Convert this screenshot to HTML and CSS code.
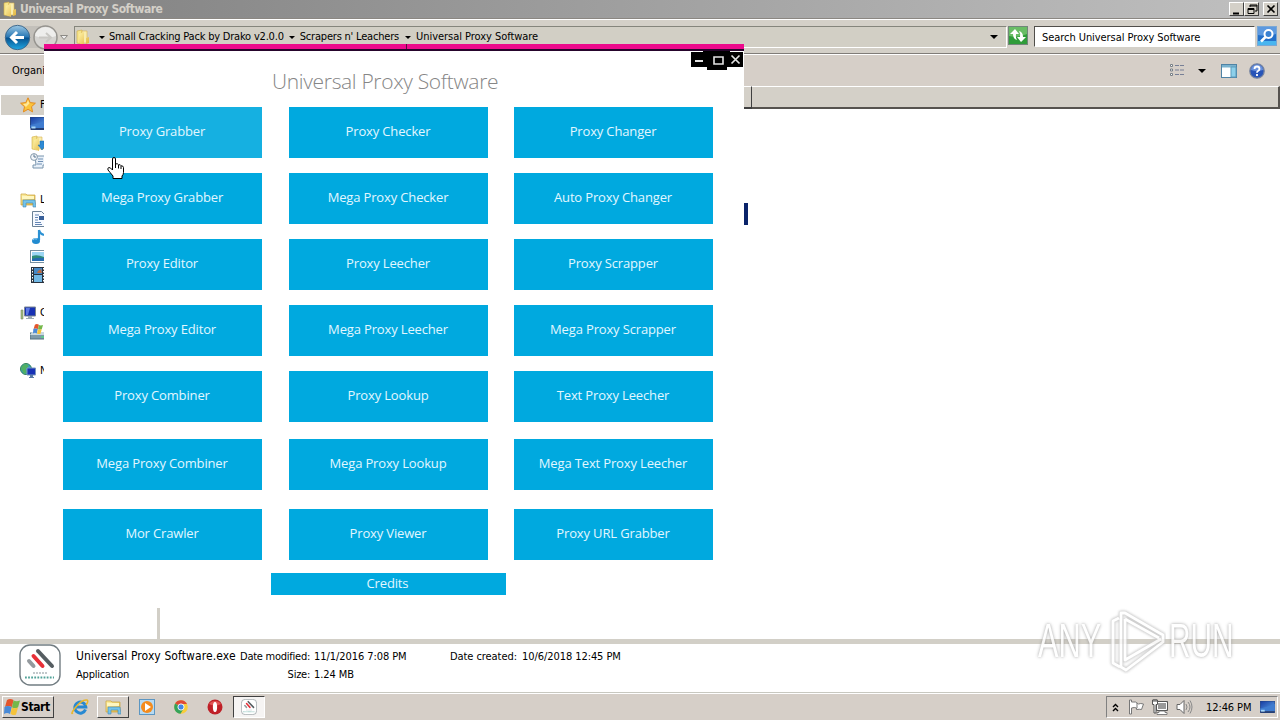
FILE: index.html
```
<!DOCTYPE html>
<html lang="en">
<head>
    <meta charset="UTF-8">
    <title>Universal Proxy Software</title>
    <link rel="stylesheet" href="styles.css">
</head>
<body>
    <!-- shared icons -->
    <svg class="defs" width="0" height="0">
        <defs>
            <linearGradient id="blue" x1="0" y1="0" x2="0" y2="1">
                <stop offset="0" stop-color="#9cc8e4"/>
                <stop offset=".48" stop-color="#2877b4"/>
                <stop offset=".52" stop-color="#07528f"/>
                <stop offset="1" stop-color="#20a8e4"/>
            </linearGradient>
            <linearGradient id="yellow" x1="0" y1="0" x2="1" y2="1">
                <stop offset="0" stop-color="#fff3a8"/>
                <stop offset="1" stop-color="#e0b23c"/>
            </linearGradient>
            <linearGradient id="screen" x1="0" y1="0" x2="1" y2="1">
                <stop offset="0" stop-color="#1538a0"/>
                <stop offset="1" stop-color="#5ca6ea"/>
            </linearGradient>
        </defs>
        <symbol id="folder" viewBox="0 0 16 16">
            <path d="M2 2l5-1v14l-5-1z" fill="#f6e48c" stroke="#d2ac45" stroke-width=".6"/>
            <path d="M7 2h5v12H7z" fill="#f9edae" stroke="#d8b450" stroke-width=".6"/>
            <path d="M4 5l5-2v13l-5-2zM11 9l3-1v6l-3 1z" fill="url(#yellow)"/>
        </symbol>
        <symbol id="library" viewBox="0 0 16 16">
            <path d="M1 2h5l1 1h8v10H1z" fill="url(#yellow)" stroke="#c9a13a" stroke-width=".7"/>
            <path d="M2 4h12v3H2z" fill="#fff7c0"/>
            <path d="M3 8h12l1 7h-3v-4H6v4H3z" fill="#74c4ea" stroke="#4387b4" stroke-width=".6"/>
        </symbol>
        <symbol id="monitor" viewBox="0 0 16 13">
            <path d="M0 0h16v11H0z" fill="url(#screen)" stroke="#244482"/>
            <path d="M0 8q8-1 16-5v8H0z" fill="#3f7cd0"/>
            <path d="M0 11h16v2H0z" fill="#243f76"/>
            <path d="M1 9.500h4v2H1z" fill="#a7d7f8"/>
        </symbol>
        <symbol id="flag" viewBox="0 0 16 16">
            <path fill="#e4552c" d="M3 1q3-2 6.500 0L8 8Q4 6 1 8z"/>
            <path fill="#74b84a" d="M9.500 1.500q3 1.500 6.500 0l-2 7q-3 1-6 0z"/>
            <path fill="#4a8ad6" d="M.5 8q3-2 7.300 0L6 15q-3-2-6 0z"/>
            <path fill="#f5c33a" d="M7.800 8.500q3 1.500 6.200 0l-2 7q-2 1.500-5.500-.5z"/>
        </symbol>
        <symbol id="applogo" viewBox="0 0 42 42">
            <rect x="1" y="1" width="40" height="40" rx="10" fill="#fff" stroke="#727d82" stroke-width="1.400"/>
            <g stroke-width="4" stroke-linecap="round">
                <path d="M19 7l14 15" stroke="#555d61"/>
                <path d="M14.500 12l9 10" stroke="#e83038"/>
                <path d="M10 17l4.500 5" stroke="#949a9e"/>
            </g>
            <path d="M14 29h14" stroke="#c3c9cc" stroke-width="2" stroke-dasharray="2 1"/>
            <path d="M6 33.500h29" stroke="#51a298" stroke-width="1.800" stroke-dasharray="1.800 1.300"/>
        </symbol>
    </svg>

    <div class="explorer">
        <div class="titlebar">
            <svg class="title-icon" width="16" height="16"><use href="#folder"/></svg>
            <span class="title-text">Universal Proxy Software</span>
            <div class="win-buttons">
                <svg width="15" height="14"><path d="M3 9.500h6v2H3z"/></svg>
                <svg width="15" height="14"><path d="M5 2h7v6h-2M5 2v2M5 3h7M3 5.500h6v5H3zM3 6.500h6" fill="none" stroke="#000"/></svg>
                <svg class="close" width="15" height="14"><path d="M3.500 2.500l7 7M10.500 2.500l-7 7" stroke="#000" stroke-width="1.600"/></svg>
            </div>
        </div>

        <div class="navbar">
            <svg class="nav-buttons" width="66" height="30" viewBox="0 0 66 30">
                <path d="M14 3h32v22H14z" fill="#c3c0ba"/>
                <circle cx="13.500" cy="14.500" r="12.200" fill="url(#blue)" stroke="#416a8c"/>
                <path d="M20 14.500H8M13 9l-5.500 5.500L13 20" fill="none" stroke="#fff" stroke-width="3"/>
                <circle cx="41.500" cy="14.500" r="11.500" fill="#d6d5d2" stroke="#96948f" stroke-width="1.500"/>
                <path d="M31 13a10.500 9 0 0 1 21 0q-10 4-21 0z" fill="#eeeeec"/>
                <path d="M35 14.500h12M42 10l5 4.500-5 4.500" fill="none" stroke="#c9c8c4" stroke-width="2"/>
                <path d="M56.500 12.500h7l-3.500 4z" fill="#eee" stroke="#8c8a85"/>
            </svg>
            <div class="address">
                <svg width="16" height="16"><use href="#folder"/></svg>
                <i class="arrow first"></i>
                <span class="crumb c1">Small Cracking Pack by Drako v2.0.0</span>
                <i class="arrow"></i>
                <span class="crumb c2">Scrapers n' Leachers</span>
                <i class="arrow third"></i>
                <span class="crumb c3">Universal Proxy Software</span>
                <i class="arrow last"></i>
            </div>
            <svg class="refresh" width="20" height="19" viewBox="0 0 20 19">
                <rect x=".5" y=".5" width="19" height="18" fill="#2f9c39" stroke="#71867a"/>
                <path d="M1 1h18v7q-9 4-18 2z" fill="#69bd65"/>
                <path d="M7 3L2 8h3q0 5 4 6-1.500-2-1-6h3z" fill="#fff"/>
                <path d="M13 16l5-5h-3q0-5-4-6 1.500 2 1 6H9z" fill="#fff"/>
            </svg>
            <div class="search"><span>Search Universal Proxy Software</span></div>
            <svg class="search-go" width="20" height="20" viewBox="0 0 20 20">
                <rect x=".5" y=".5" width="19" height="19" fill="#236fc9" stroke="#7aa7d4"/>
                <path d="M1 1h18v7Q10 11 1 9z" fill="#5d99df"/>
                <path d="M1 15h18v4H1z" fill="#49b5ef"/>
                <circle cx="11.500" cy="8" r="4" fill="#3b82d2" stroke="#fff" stroke-width="2"/>
                <path d="M8.500 11L4 15.500" stroke="#fff" stroke-width="2.500"/>
            </svg>
        </div>

        <div class="toolbar">
            <span class="organize">Organi</span>
            <svg class="views" width="16" height="14" viewBox="0 0 16 14">
                <path d="M1.500.5h2v2h-2zM1.500 5h2v2h-2zM1.500 9.500h2v2h-2z" fill="#fff" stroke="#777f86"/>
                <path d="M6 1.500h4M11 1.500h4M6 6h4M11 6h4M6 10.500h4M11 10.500h4" stroke="#777f96"/>
            </svg>
            <i class="arrow"></i>
            <svg class="preview" width="16" height="14" viewBox="0 0 16 14">
                <rect x=".5" y=".5" width="15" height="13" fill="#fff" stroke="#4f83a5"/>
                <path d="M1 1h14v2.500H1z" fill="#79b2ce"/>
                <path d="M10 3h5v10h-5z" fill="#8dd0ea" stroke="#5c9bbb"/>
            </svg>
            <svg class="help" width="16" height="16" viewBox="0 0 16 16">
                <circle cx="8" cy="8" r="7.200" fill="#2854b8" stroke="#75839f" stroke-width="1.300"/>
                <path d="M2 7a6 5.500 0 0 1 12 0q-6 2-12 0z" fill="#6a91dc"/>
                <path d="M5.500 6q0-2.500 2.500-2.500T10.500 6q0 1-1.500 2-1 .5-1 1.800M8 11v2" fill="none" stroke="#fff" stroke-width="1.800"/>
            </svg>
        </div>

        <div class="columns-bar"><div class="columns-left"></div><div class="columns-main"></div></div>

        <div class="panes">
            <div class="sidebar">
                <div class="side-item selected">
                    <svg width="16" height="16" viewBox="0 0 16 16"><path d="M8 .8l2.200 4.800 5.200.6-3.900 3.500 1.100 5.200L8 12.300l-4.600 2.600 1.100-5.200L.6 6.200l5.200-.6z" fill="#fbc43b" stroke="#e38b20"/><path d="M8 3l1.400 3.500L6 10 3 7l3.500-.5z" fill="#ffe798"/></svg>
                    <span>F</span>
                </div>
                <div class="side-item sub"><svg width="17" height="13"><use href="#monitor"/></svg></div>
                <div class="side-item sub">
                    <svg width="16" height="16" viewBox="0 0 16 16"><use href="#folder"/><path d="M10 6h4v4h2l-4 5-4-5h2z" fill="#2d89d4" stroke="#1c68aa" stroke-width=".5"/></svg>
                </div>
                <div class="side-item sub">
                    <svg width="16" height="16" viewBox="0 0 16 16"><path d="M5 3h10v9h-2v3H3v-3h3z" fill="#e8f0f8" stroke="#7894ad"/><path d="M8 6h5M8 8.500h5M7 11h5" stroke="#7190b4"/><circle cx="4" cy="4" r="3.400" fill="#f4f7fa" stroke="#8499aa"/><path d="M4 1.500V4h2" stroke="#58758f" fill="none"/></svg>
                </div>
                <div class="side-item group"><svg width="16" height="16"><use href="#library"/></svg><span>L</span></div>
                <div class="side-item sub">
                    <svg width="16" height="16" viewBox="0 0 16 16"><path d="M2.500.5h9l3 3v12h-12z" fill="#f7faff" stroke="#6b8197"/><path d="M5 4h4M5 6.500h3M5 9h3M5 11.500h6M5 13.500h7" stroke="#6485b4"/><path d="M9 5h5v4H9z" fill="#385f99"/></svg>
                </div>
                <div class="side-item sub">
                    <svg width="16" height="16" viewBox="0 0 16 16"><path d="M9 1v10M9 1q1 4 5 5" fill="none" stroke="#2b91d3" stroke-width="2.200"/><ellipse cx="6" cy="12" rx="4" ry="3" fill="#218bd0"/><path d="M3 11q1-2 4-1" stroke="#8fd0f6" fill="none"/></svg>
                </div>
                <div class="side-item sub pictures">
                    <svg width="16" height="13" viewBox="0 0 16 13"><rect x=".5" y=".5" width="15" height="12" fill="#fff" stroke="#7890a0"/><path d="M2 2h12v9H2z" fill="#9cd6f3"/><path d="M2 6q5-2 12 1v4H2z" fill="#2e8d78"/><path d="M2 9q6-2 12-1v3H2z" fill="#246bb0"/></svg>
                </div>
                <div class="side-item sub">
                    <svg width="16" height="16" viewBox="0 0 16 16"><path d="M1 0h14v16H1z" fill="#29333f"/><path d="M4 1h8v6H4z" fill="#4588c5"/><path d="M4 8h8v7H4z" fill="#71b8e5"/><path d="M8 4l3-2 1 4H7z" fill="#bc6c42"/><path d="M2.500 1v15M13.500 1v15" stroke="#fff" stroke-dasharray="1.500 1.500"/></svg>
                </div>
                <div class="side-item group">
                    <svg width="16" height="16" viewBox="0 0 16 16"><path d="M1 5h2v9H1z" fill="#a2bd79" stroke="#788a6d" stroke-width=".6"/><path d="M4.500 2h11v9h-11z" fill="#1731b4" stroke="#7b8792"/><path d="M6 3l4 0-2 7H6z" fill="#5c78e4"/><path d="M8 11h4v2h2v1H6v-1h2z" fill="#9dabb5"/></svg>
                    <span>C</span>
                </div>
                <div class="side-item sub">
                    <svg width="17" height="16" viewBox="0 0 17 16"><path d="M0 9h17v6H0z" fill="#7e9aa9" stroke="#52707f"/><path d="M2 8h13l2 3H0z" fill="#c8d8df"/><svg x="2" y="0" width="12" height="10"><use href="#flag"/></svg><path d="M11 13h3" stroke="#41ef75"/></svg>
                </div>
                <div class="side-item group">
                    <svg width="16" height="16" viewBox="0 0 16 16"><circle cx="6" cy="6" r="5.500" fill="#359bd1" stroke="#338052"/><path d="M2 3q4-4 7 0L6 6l1 4-3 1-3-5z" fill="#50b063"/><path d="M7 5h8.500v7H7z" fill="#1832b6" stroke="#7996bd"/><path d="M10 12h3v2h1v1H9v-1h1z" fill="#5a7ba5"/></svg>
                    <span>N</span>
                </div>
            </div>
            <div class="files"><div class="file-selected"></div></div>
        </div>

        <div class="details">
            <svg width="42" height="42"><use href="#applogo"/></svg>
            <div class="file-name">
                <span class="exe">Universal Proxy Software.exe</span>
                <span class="app-type">Application</span>
            </div>
            <dl class="file-dates">
                <dt class="modified">Date modified:</dt><dd class="modified-date">11/1/2016 7:08 PM</dd>
                <dt class="size">Size:</dt><dd class="size-value">1.24 MB</dd>
            </dl>
            <dl class="file-created">
                <dt class="created">Date created:</dt><dd class="created-date">10/6/2018 12:45 PM</dd>
            </dl>
        </div>
    </div>

    <div class="taskbar">
        <div class="start"><svg width="16" height="16"><use href="#flag"/></svg><b>Start</b></div>
        <svg class="quick ie" width="18" height="18" viewBox="0 0 18 18"><path d="M14.500 11.500A5.500 5.500 0 1 1 14.800 9H5" fill="none" stroke="#2889d2" stroke-width="3"/><path d="M2 15Q-1 17 4 10 11 1 16 2q2 1-1 5" fill="none" stroke="#e9b72b" stroke-width="1.500"/></svg>
        <div class="task-button"><svg width="16" height="16"><use href="#library"/></svg></div>
        <svg class="quick media" width="16" height="16" viewBox="0 0 16 16"><rect x=".5" y=".5" width="15" height="15" fill="#b7daf2" stroke="#5c96c2"/><circle cx="8" cy="8" r="6" fill="#f48b1d"/><path d="M6 4l6 4-6 4z" fill="#fff"/></svg>
        <svg class="quick chrome" width="14" height="14" viewBox="0 0 14 14"><circle cx="7" cy="7" r="6.800" fill="#f8cd3b"/><path d="M7 7L1.100 3.600A6.800 6.800 0 0 1 13 4H7z" fill="#df4937"/><path d="M7 7L1.100 3.600A6.800 6.800 0 0 0 6.500 13.800L10 8z" fill="#35a35b"/><circle cx="7" cy="7" r="3.100" fill="#4386e5" stroke="#fff" stroke-width=".9"/></svg>
        <svg class="quick opera" width="16" height="16" viewBox="0 0 16 16"><circle cx="8" cy="8" r="7.500" fill="#bf2027"/><path d="M2 5a7 6 0 0 1 12 0q-6 3-12 0z" fill="#e15455"/><ellipse cx="8" cy="8" rx="2.100" ry="5" fill="#fff"/></svg>
        <div class="task-button active"><svg width="16" height="16"><use href="#applogo"/></svg></div>
        <div class="tray">
            <svg class="chevron" width="7" height="9" viewBox="0 0 7 9"><path d="M1 4l2.500-2.500L6 4M1 8l2.500-2.500L6 8" fill="none" stroke="#000" stroke-width="1.400"/></svg>
            <svg class="tray-flag" width="16" height="16" viewBox="0 0 16 16"><path d="M1.500 1v14h2V9q3-1 5 0v1.500q3-.5 5 0l2-5.500q-3-1-5 0Q8 2 3.500 3V1z" fill="#fff" stroke="#777"/><path d="M9 4v5" stroke="#777"/></svg>
            <svg class="net" width="16" height="16" viewBox="0 0 16 16"><path d="M4.500 2.500h11v9h-11z" fill="#999" stroke="#555"/><path d="M5.500 3.500h9v7h-9z" fill="none" stroke="#fff"/><path d="M7 12h6v1.500h2v2H5v-2h2z" fill="#fff" stroke="#666" stroke-width=".8"/><path d="M.5 1h5v4.500h-1.500V14h-2V5.500H.5z" fill="#fff" stroke="#555"/><path d="M2 0v3M4 0v3" stroke="#555"/></svg>
            <svg class="sound" width="17" height="16" viewBox="0 0 17 16"><path d="M1 5.500h3l4-4v13l-4-4H1z" fill="#fff" stroke="#666"/><path d="M10 5q2 3 0 6M12 3q4 5 0 10M14 1.500q4 6.500 0 13" fill="none" stroke="#888"/></svg>
            <span class="clock">12:46 PM</span>
            <svg class="show-desktop" width="15" height="12"><use href="#monitor"/></svg>
        </div>
    </div>

    <div class="app">
        <i class="notch"></i>
        <div class="app-head">
            <svg class="app-controls" width="53" height="20" viewBox="0 0 53 20">
                <path d="M0 1h12V0h27v1h13v15H36v3H16v-3H0z"/>
                <path d="M4 9h8v2H4z" fill="#e4e4e4"/>
                <path d="M23 6h9v7h-9z" fill="none" stroke="#e4e4e4" stroke-width="1.600"/>
                <path d="M40.500 4.500l8 8M48.500 4.500l-8 8" stroke="#e4e4e4" stroke-width="1.700"/>
            </svg>
        </div>
        <h1>Universal Proxy Software</h1>
        <div class="tiles">
            <div class="tile hover"><span>Proxy Grabber</span></div>
            <div class="tile"><span>Proxy Checker</span></div>
            <div class="tile"><span>Proxy Changer</span></div>
            <div class="tile"><span>Mega Proxy Grabber</span></div>
            <div class="tile"><span>Mega Proxy Checker</span></div>
            <div class="tile"><span>Auto Proxy Changer</span></div>
            <div class="tile"><span>Proxy Editor</span></div>
            <div class="tile"><span>Proxy Leecher</span></div>
            <div class="tile"><span>Proxy Scrapper</span></div>
            <div class="tile"><span>Mega Proxy Editor</span></div>
            <div class="tile"><span>Mega Proxy Leecher</span></div>
            <div class="tile"><span>Mega Proxy Scrapper</span></div>
            <div class="tile"><span>Proxy Combiner</span></div>
            <div class="tile"><span>Proxy Lookup</span></div>
            <div class="tile"><span>Text Proxy Leecher</span></div>
            <div class="tile"><span>Mega Proxy Combiner</span></div>
            <div class="tile"><span>Mega Proxy Lookup</span></div>
            <div class="tile"><span>Mega Text Proxy Leecher</span></div>
            <div class="tile"><span>Mor Crawler</span></div>
            <div class="tile"><span>Proxy Viewer</span></div>
            <div class="tile"><span>Proxy URL Grabber</span></div>
        </div>
        <div class="tile credits"><span>Credits</span></div>
    </div>

    <svg class="cursor" width="18" height="23" viewBox="0 0 18 23">
        <path d="M5.500 13V2q0-1.500 1.500-1.500T8.500 2v5q2-1 3 .8 2-.6 2.700 1 2-.2 2.300 1.700v5q0 2-1.500 3.500v2.500H6V19l-5-6q-.8-2 1-2.500 1.500 0 3.500 2.500z" fill="#fff" stroke="#000"/>
        <path d="M8.500 7v4M11.500 8v3.500M14 9v3" stroke="#000"/>
    </svg>

    <div class="watermark">
        <div class="wm-word"><span>ANY</span></div>
        <svg width="62" height="66" viewBox="0 0 62 66">
            <g fill="none" stroke-linejoin="round">
                <path class="wm-shadow" d="M21 5L59 27v7L22 62l-5-3V5zM21 11v41L57 31M21 11l34 19M15 10l-6 3v42l7 4"/>
                <path d="M21 5L59 27v7L22 62l-5-3V5zM21 11v41L57 31M21 11l34 19M15 10l-6 3v42l7 4" stroke="#fff" stroke-width="2.800"/>
            </g>
        </svg>
        <div class="wm-word run"><span>RUN</span></div>
    </div>
</body>
</html>
```
FILE: styles.css
```
* {
    box-sizing: border-box;
    margin: 0;
    padding: 0;
}
body {
    width: 1280px;
    height: 720px;
    overflow: hidden;
    position: relative;
    display: flex;
    flex-direction: column;
    background: #fff;
    color: #000;
    font: 11px/14px "DejaVu Sans Condensed", "DejaVu Sans", sans-serif;
    white-space: nowrap;
}
svg {
    display: block;
    flex: none;
}
.defs {
    position: absolute;
}
.explorer {
    height: 693px;
    display: flex;
    flex-direction: column;
}

/* title bar */
.titlebar {
    height: 19px;
    display: flex;
    align-items: center;
    padding: 0 2px;
    background: linear-gradient(to right, #808080, #c0c0c0);
    border-bottom: 1px solid #8b8782;
}
.title-text {
    margin-left: 2px;
    font: bold 12px/16px "DejaVu Sans Condensed", sans-serif;
    letter-spacing: -.5px;
    color: #d4d0c8;
}
.win-buttons {
    margin-left: auto;
    display: flex;
}
.win-buttons svg {
    background: #d4d0c8;
    border: 1px solid;
    border-color: #fff #404040 #404040 #fff;
}
.win-buttons .close {
    margin-left: 4px;
}

/* address row */
.navbar {
    height: 35px;
    display: flex;
    align-items: flex-start;
    padding: 4px 2px 0 4px;
    background: #d4d0c8;
    border-top: 1px solid #fff;
    border-bottom: 1px solid #807c78;
}
.nav-buttons {
    margin-top: -1px;
}
.address {
    width: 933px;
    height: 22px;
    margin: 2px 0 0 4px;
    display: flex;
    align-items: center;
    border: 1px solid;
    border-color: #85857c #fff #fff #85857c;
    background: #d2cfc5;
}
.arrow {
    border: 3px solid transparent;
    border-top-color: #000;
    border-bottom: 0;
    margin: 0 5px;
}
.c1, .c2 {
    letter-spacing: -.2px;
}
.c3 {
    letter-spacing: -.04px;
}
.arrow.first {
    margin: 0 4px 0 8px;
}
.arrow.third {
    margin: 0 5px 0 6px;
}
.arrow.last {
    border-width: 4px 4px 0;
    margin: 0 8px 0 auto;
}
.refresh {
    margin: 2px 6px 0 1px;
}
.search {
    width: 221px;
    height: 21px;
    margin-top: 2px;
    padding: 4px 7px 0;
    background: #fff;
    border: 1px solid;
    border-color: #504e4a #fff #fff #504e4a;
    letter-spacing: -.06px;
    line-height: 13px;
}
.search-go {
    margin: 2px 0 0 2px;
}

/* toolbar */
.toolbar {
    height: 32px;
    display: flex;
    align-items: center;
    padding: 0 15px 0 12px;
    background: #d6cfc8;
    border-top: 1px solid #fff;
}
.views {
    margin-left: auto;
}
.toolbar .arrow {
    border-width: 4px 4px 0;
    margin: 0 15px 0 13px;
}
.help {
    margin-left: 12px;
}
.columns-bar {
    height: 23px;
    display: flex;
    padding-left: 44px;
}
.columns-left {
    width: 708px;
    border: solid #404040;
    border-width: 0 1px 2px 0;
    border-top: 1px solid #fff;
    background: #d4d0c8;
}
.columns-main {
    flex: 1;
    background: #d4d0c8;
    border: solid #56534f;
    border-width: 0 2px 2px 0;
    border-top: 1px solid #fff;
}

/* panes */
.panes {
    height: 535px;
    display: flex;
    border-bottom: 5px solid #d2cfc7;
}
.sidebar {
    width: 160px;
    margin-top: -14px;
    border-right: 3px solid #d2cfc7;
}
.side-item {
    width: 44px;
    height: 18.700px;
    display: flex;
    align-items: center;
    gap: 4px;
    padding-left: 20px;
}
.side-item.selected {
    width: 43px;
    height: 19.500px;
    margin-left: 1px;
    padding-left: 19px;
    background: #d4d0c8;
}
.side-item.sub {
    padding-left: 30px;
}
.side-item.pictures {
    padding-top: 2px;
}
.side-item.group {
    margin-top: 20px;
}
.file-selected {
    width: 588px;
    height: 22px;
    margin-top: 94px;
    background: #0a246a;
}

/* details */
.details {
    height: 49px;
    display: flex;
    padding-left: 19px;
    border-bottom: 1px solid #c8c8c0;
    background: #fff;
}
.file-name {
    display: flex;
    flex-direction: column;
    gap: 5px;
    width: 164px;
    margin-left: 15px;
    padding-top: 5px;
}
.exe {
    font-size: 12px;
    letter-spacing: .1px;
}
.app-type {
    letter-spacing: -.2px;
}
.file-dates, .file-created {
    display: grid;
    grid-template-columns: 70px auto;
    gap: 4px;
    height: 32px;
    margin-top: 6px;
    letter-spacing: -.07px;
}
.file-dates {
    width: 210px;
}
.file-dates dt {
    text-align: right;
    letter-spacing: -.25px;
}
.file-created {
    grid-template-columns: 68px auto;
}

/* taskbar */
.taskbar {
    height: 27px;
    display: flex;
    align-items: center;
    padding: 0 2px;
    background: #d6cfc8;
    border-top: 1px solid #fff;
}
.start {
    width: 52px;
    height: 22px;
    display: flex;
    align-items: center;
    gap: 1px;
    padding-left: 1px;
    border: 1px solid;
    border-color: #fff #404040 #404040 #fff;
    font-size: 12px;
    letter-spacing: -.4px;
}
.ie {
    margin-left: 17px;
}
.task-button {
    width: 32px;
    height: 22px;
    display: flex;
    align-items: center;
    justify-content: center;
    margin-left: 8px;
    border: 1px solid;
    border-color: #fff #404040 #404040 #fff;
}
.media {
    margin-left: 10px;
}
.chrome {
    margin-left: 19px;
}
.opera {
    margin-left: 19px;
}
.task-button.active {
    margin-left: 10px;
    background: #f6f4f3;
    border-color: #404040 #fff #fff #404040;
}
.tray {
    width: 172px;
    height: 22px;
    margin-left: auto;
    display: flex;
    align-items: center;
    padding-left: 5px;
    border: 1px solid;
    border-color: #808080 #fff #fff #808080;
}
.tray-flag {
    margin-left: 9px;
}
.net, .sound {
    margin-left: 8px;
}
.clock {
    width: 45px;
    margin-left: 13px;
    padding-top: 1px;
    letter-spacing: -.1px;
}
.show-desktop {
    margin-left: 9px;
}

/* proxy tool window */
.app {
    position: absolute;
    left: 44px;
    top: 44px;
    width: 700px;
    height: 564px;
    background: #fff;
    border-top: 5px solid #ec0a8c;
}
.notch {
    position: absolute;
    left: 362px;
    top: -5px;
    width: 1px;
    height: 5px;
    background: #5c0a40;
}
.app-head {
    height: 20px;
    display: flex;
    justify-content: flex-end;
    border-top: 2px solid #26052c;
}
.app h1 {
    height: 38px;
    padding-left: 228px;
    font: 300 21px/24px "Open Sans", sans-serif;
    letter-spacing: -.33px;
    color: #868686;
}
.tiles {
    display: grid;
    grid-template-columns: 226px 225px 199px;
    grid-template-rows: 66px 66px 66px 66px 68px 70px 51px;
    padding-left: 19px;
}
.tile {
    width: 199px;
    height: 51px;
    display: flex;
    align-items: center;
    justify-content: center;
    padding: 0 1px 4px 0;
    background: #00a9df;
    color: #e2f7ff;
    font: 13px/18px "Open Sans", sans-serif;
    letter-spacing: -.15px;
}
.tile.hover {
    background: #15b0e1;
}
.tile.credits {
    width: 235px;
    height: 22px;
    margin: 13px 0 0 227px;
    padding: 0 2px 2px 0;
}
.cursor {
    position: absolute;
    left: 107px;
    top: 157px;
}

/* logo over the desktop */
.watermark {
    position: absolute;
    left: 1038px;
    top: 608px;
    display: flex;
    align-items: center;
    opacity: .85;
    color: #fff;
    font: 48px/64px "Liberation Sans", sans-serif;
    text-shadow: 0 0 4px #888;
}
.wm-word {
    width: 66px;
}
.wm-word span {
    display: inline-block;
    transform: scaleX(.64);
    transform-origin: left;
}
.wm-word.run {
    margin-left: 3px;
}
.wm-word.run span {
    transform: scaleX(.62);
}
.wm-shadow {
    stroke: #c8c8c8;
    stroke-width: 5;
    filter: blur(1px);
}
```
